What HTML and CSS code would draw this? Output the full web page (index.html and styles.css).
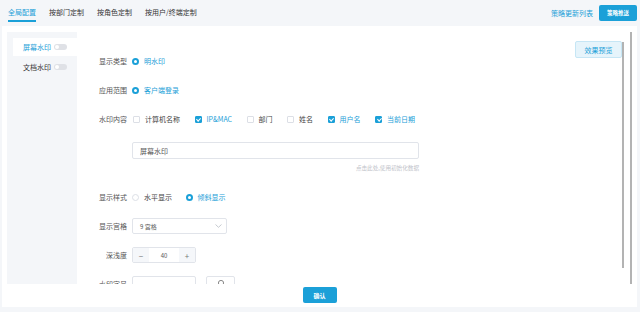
FILE: index.html
```html
<!DOCTYPE html>
<html lang="zh-CN">
<head>
    <meta charset="UTF-8">
    <meta name="viewport" content="width=device-width, initial-scale=1.0">
    <title>水印配置</title>
    <link rel="stylesheet" href="styles.css">
</head>
<body>
    <div class="topbar">
        <nav class="tabs">
            <a class="tab active">全局配置</a>
            <a class="tab">按部门定制</a>
            <a class="tab">按角色定制</a>
            <a class="tab">按用户/终端定制</a>
        </nav>
        <div class="top-actions">
            <a class="link">策略更新列表</a>
            <button class="btn btn-primary btn-push">策略推送</button>
        </div>
    </div>

    <div class="panel">
        <div class="panel-body">
            <aside class="sidebar">
                <div class="side-item active"><span>屏幕水印</span><i class="switch"></i></div>
                <div class="side-item"><span>文档水印</span><i class="switch"></i></div>
            </aside>

            <div class="main">
                <div class="form">
                    <div class="row">
                        <label class="row-label">显示类型</label>
                        <span class="opt checked"><i class="radio on"></i>明水印</span>
                    </div>
                    <div class="row">
                        <label class="row-label">应用范围</label>
                        <span class="opt checked"><i class="radio on"></i>客户端登录</span>
                    </div>
                    <div class="row">
                        <label class="row-label">水印内容</label>
                        <span class="opt"><i class="check"></i>计算机名称</span>
                        <span class="opt checked"><i class="check on"></i>IP&amp;MAC</span>
                        <span class="opt"><i class="check"></i>部门</span>
                        <span class="opt"><i class="check"></i>姓名</span>
                        <span class="opt checked"><i class="check on"></i>用户名</span>
                        <span class="opt checked"><i class="check on"></i>当前日期</span>
                    </div>
                    <div class="row-free">
                        <input class="text-input" type="text" value="屏幕水印">
                        <div class="hint">点击此处,使用初始化数据</div>
                    </div>
                    <div class="row row-style">
                        <label class="row-label">显示样式</label>
                        <span class="opt"><i class="radio"></i>水平显示</span>
                        <span class="opt checked"><i class="radio on"></i>倾斜显示</span>
                    </div>
                    <div class="row">
                        <label class="row-label">显示宫格</label>
                        <div class="select">
                            <span>9 宫格</span>
                            <svg width="7" height="4" viewBox="0 0 7 4"><path d="M0.5 0.5 L3.5 3.3 L6.5 0.5" fill="none" stroke="#b8bcc4" stroke-width="0.8"/></svg>
                        </div>
                    </div>
                    <div class="row">
                        <label class="row-label">深浅度</label>
                        <div class="stepper">
                            <span class="step">−</span>
                            <span class="step-val">40</span>
                            <span class="step">+</span>
                        </div>
                    </div>
                    <div class="row">
                        <label class="row-label">水印字号</label>
                        <div class="small-input"></div>
                        <div class="icon-box">
                            <svg width="8" height="8" viewBox="0 0 8 8"><circle cx="4" cy="4" r="2.6" fill="none" stroke="#888" stroke-width="1"/></svg>
                        </div>
                    </div>
                </div>

                <button class="btn-preview">效果预览</button>
                <div class="inner-bar"></div>
            </div>

            <div class="outer-bar"></div>
        </div>

        <div class="panel-foot">
            <button class="btn btn-primary btn-confirm">确认</button>
        </div>
    </div>
</body>
</html>
```

FILE: styles.css
```css
body {
    margin: 0;
    background: #f4f6f9;
    font-family: "Noto Sans CJK SC", "Noto Sans", sans-serif;
    font-size: 7px;
    color: #333;
    width: 640px;
    height: 312px;
    overflow: hidden;
}
button {
    font-family: inherit;
    border: none;
    cursor: pointer;
}
.topbar {
    height: 26px;
    display: flex;
    justify-content: space-between;
    align-items: flex-start;
    padding: 0 3px 0 8px;
}
.tabs {
    display: flex;
    gap: 13px;
}
.tab {
    padding-top: 8px;
    line-height: 8px;
    padding-bottom: 4px;
    border-bottom: 2px solid transparent;
    color: #333;
}
.tab.active {
    color: #1ba0d8;
    border-bottom-color: #1ba0d8;
}
.top-actions {
    display: flex;
    align-items: center;
    padding-top: 5px;
}
.link {
    color: #1ba0d8;
    line-height: 16px;
}
.btn-primary {
    background: #1ba0d8;
    color: #fff;
    border-radius: 2px;
}
.btn-push {
    margin-left: 6px;
    width: 38px;
    height: 16px;
    font-size: 5.5px;
    font-weight: bold;
    padding: 0;
}
.panel {
    background: #fff;
    margin: 0 3px 0 2px;
    height: 281px;
    display: flex;
    flex-direction: column;
}
.panel-body {
    height: 252px;
    margin-top: 6px;
    padding: 0 5px;
    display: flex;
}
.sidebar {
    width: 70px;
    background: #f4f6f9;
    padding-top: 6px;
    box-sizing: border-box;
}
.side-item {
    margin-left: 6px;
    height: 18px;
    display: flex;
    align-items: center;
    padding-left: 10px;
    color: #333;
    margin-bottom: 2px;
}
.side-item.active {
    background: #fff;
    color: #1ba0d8;
}
.switch {
    margin-left: 3px;
    width: 13px;
    height: 6px;
    border-radius: 3px;
    background: #dfe1e6;
    position: relative;
}
.switch::after {
    content: "";
    position: absolute;
    left: 1px;
    top: 1px;
    width: 4px;
    height: 4px;
    border-radius: 50%;
    background: #fff;
}
.main {
    flex: 1;
    display: flex;
}
.form {
    flex: 1;
    overflow: hidden;
    padding-top: 21px;
    display: flex;
    flex-direction: column;
    gap: 13px;
}
.row {
    display: flex;
    align-items: center;
    height: 16px;
    flex-shrink: 0;
}
.row-label {
    width: 50px;
    margin-right: 5px;
    text-align: right;
    color: #555;
}
.opt {
    display: flex;
    align-items: center;
    margin-right: 13.5px;
    color: #444;
}
.opt.checked {
    color: #1ba0d8;
}
.radio {
    width: 7px;
    height: 7px;
    border-radius: 50%;
    border: 1px solid #dcdfe6;
    box-sizing: border-box;
    margin-right: 5px;
}
.radio.on {
    border: 2px solid #1ba0d8;
    background: #fff;
}
.check {
    width: 7px;
    height: 7px;
    border: 1px solid #dcdfe6;
    border-radius: 1px;
    box-sizing: border-box;
    margin-left: 1px;
    margin-right: 5px;
    position: relative;
}
.check.on {
    background: #1ba0d8;
    border-color: #1ba0d8;
}
.check.on::after {
    content: "";
    position: absolute;
    left: 1.6px;
    top: 0.4px;
    width: 1.6px;
    height: 3.2px;
    border: solid #fff;
    border-width: 0 0.8px 0.8px 0;
    transform: rotate(45deg);
}
.row-free {
    padding-left: 55px;
    margin-top: 2px;
    width: 287px;
    flex-shrink: 0;
}
.text-input {
    display: block;
    width: 287px;
    height: 17px;
    box-sizing: border-box;
    border: 1px solid #e1e4ea;
    border-radius: 2px;
    padding: 0 7px;
    font-family: inherit;
    font-size: 7px;
    color: #555;
    outline: none;
}
.hint {
    text-align: right;
    font-size: 5.6px;
    color: #bfc3ca;
    margin-top: 5px;
    line-height: 8px;
}
.row-style {
    margin-top: 4px;
}
.select {
    width: 95px;
    height: 16px;
    box-sizing: border-box;
    border: 1px solid #e1e4ea;
    border-radius: 2px;
    display: flex;
    align-items: center;
    justify-content: space-between;
    padding: 0 4px 0 7px;
    color: #555;
    font-size: 6px;
}
.stepper {
    width: 64px;
    height: 16px;
    box-sizing: border-box;
    border: 1px solid #e1e4ea;
    border-radius: 2px;
    display: flex;
    align-items: center;
}
.step {
    width: 16px;
    height: 100%;
    background: #f5f7fa;
    color: #777;
    display: flex;
    align-items: center;
    justify-content: center;
    font-size: 8px;
}
.step-val {
    flex: 1;
    text-align: center;
    font-size: 6px;
    color: #555;
}
.small-input {
    width: 64px;
    height: 16px;
    box-sizing: border-box;
    border: 1px solid #e1e4ea;
    border-radius: 2px;
}
.icon-box {
    margin-left: 10px;
    width: 29px;
    height: 16px;
    box-sizing: border-box;
    border: 1px solid #e1e4ea;
    border-radius: 2px;
    display: flex;
    justify-content: center;
    padding-top: 2px;
}
.btn-preview {
    align-self: flex-start;
    margin-top: 9px;
    width: 47px;
    height: 17px;
    padding: 0;
    background: #e6f4fb;
    border: 1px solid #c6e6f5;
    border-radius: 2px;
    color: #1ba0d8;
    font-size: 7px;
}
.inner-bar {
    width: 2px;
    height: 226px;
    margin-top: 10px;
    background: #b3b3b3;
}
.outer-bar {
    width: 2px;
    margin-left: 6px;
    background: #b3b3b3;
}
.panel-foot {
    flex: 1;
    display: flex;
    justify-content: center;
    padding-top: 3px;
}
.btn-confirm {
    width: 34px;
    height: 16px;
    font-size: 6px;
    font-weight: bold;
    padding: 0;
}
```
